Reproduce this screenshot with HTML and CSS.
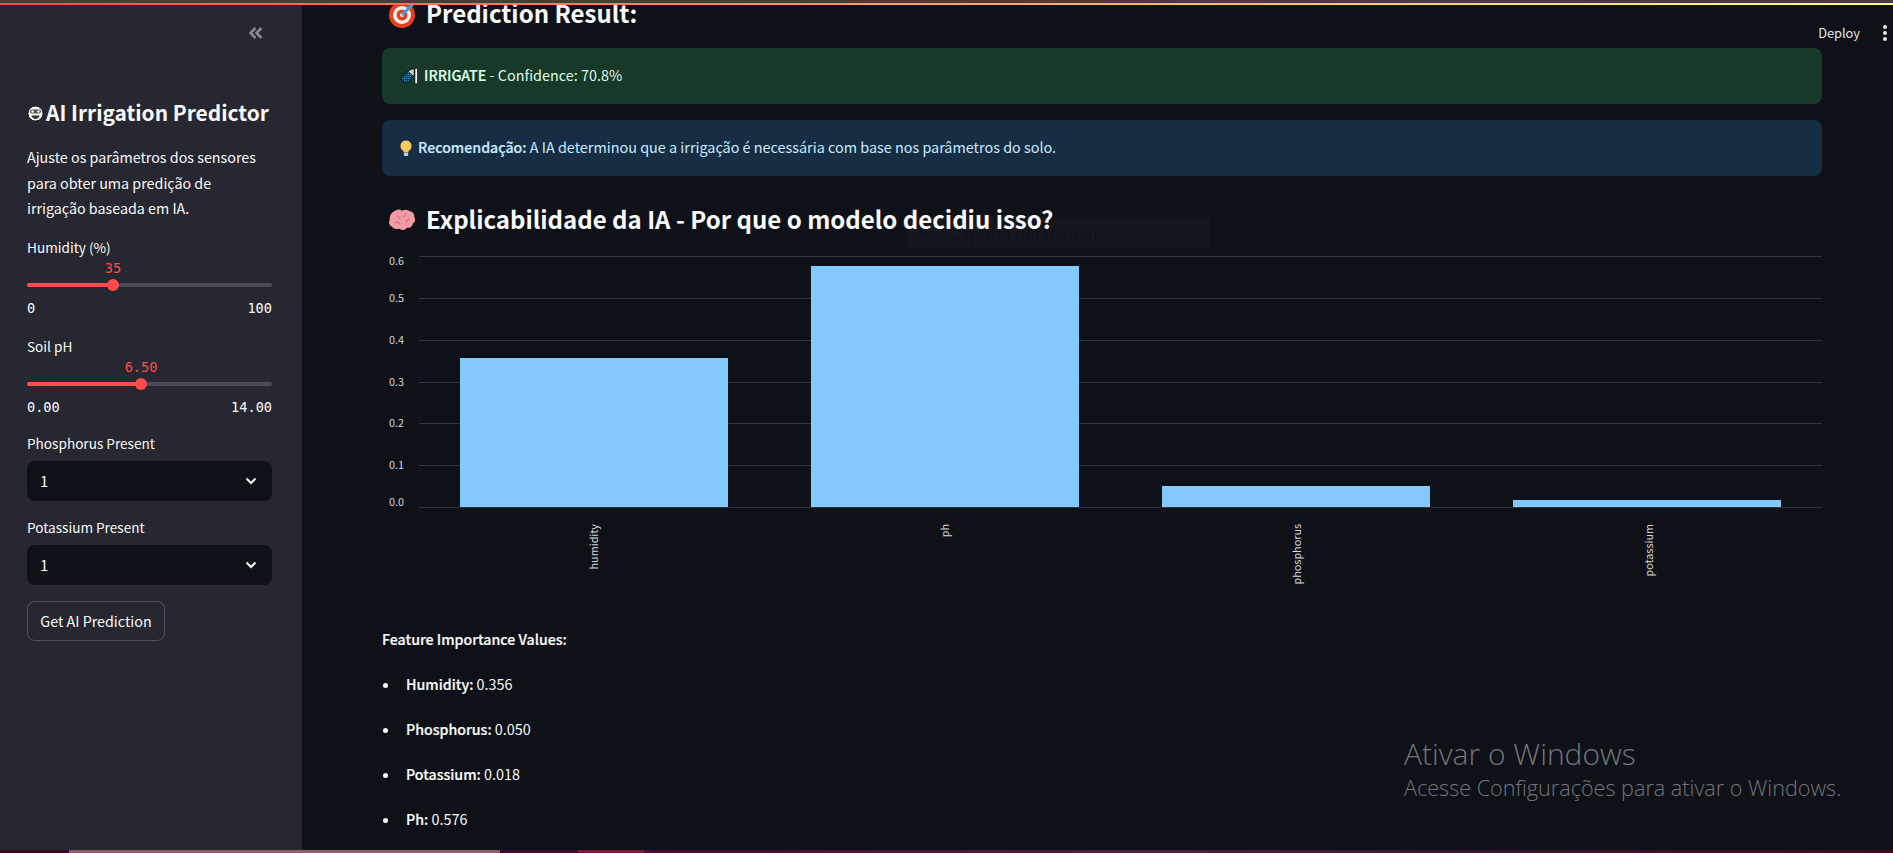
FILE: index.html
```html
<!DOCTYPE html>
<html lang="en">
<head>
    <meta charset="UTF-8">
    <title>AI Irrigation Predictor</title>
    <link rel="stylesheet" href="styles.css">
</head>
<body>
    <div class="top-strip"></div>
    <div class="app">
        <aside class="sidebar">
            <div class="collapse-row">
                <svg width="14" height="12" viewBox="0 0 14 12" fill="none" stroke="#8b8c93" stroke-width="2.600"><path d="M6.500 1 1.500 6l5 5M12.500 1l-5 5 5 5"/></svg>
            </div>
            <h2 class="side-title">
                <svg class="nerd" width="17" height="17" viewBox="0 0 17 17"><circle cx="8.500" cy="8.500" r="7.600" fill="#f2f2f2" stroke="#111" stroke-width="1"/><rect x="3" y="4.500" width="11" height="4" rx="2" fill="#555"/><circle cx="5.600" cy="6.500" r="1.300" fill="#eee"/><circle cx="11.400" cy="6.500" r="1.300" fill="#eee"/><path d="M4.500 10.500h8c-.6 2.400-2 3.400-4 3.400s-3.400-1-4-3.400z" fill="#333"/></svg>
                <span>AI Irrigation Predictor</span>
            </h2>
            <p class="side-text">Ajuste os parâmetros dos sensores para obter uma predição de irrigação baseada em IA.</p>

            <div class="widget slider-widget">
                <label class="field-label">Humidity (%)</label>
                <div class="slider-value"><span class="humidity-value">35</span></div>
                <div class="track"><div class="fill humidity-fill"><span class="thumb"></span></div></div>
                <div class="range"><span>0</span><span>100</span></div>
            </div>

            <div class="widget slider-widget">
                <label class="field-label">Soil pH</label>
                <div class="slider-value"><span class="ph-value">6.50</span></div>
                <div class="track"><div class="fill ph-fill"><span class="thumb"></span></div></div>
                <div class="range"><span>0.00</span><span>14.00</span></div>
            </div>

            <div class="widget select-widget">
                <label class="field-label">Phosphorus Present</label>
                <div class="select-box">
                    <span>1</span>
                    <svg width="12" height="8" viewBox="0 0 12 8" fill="none" stroke="#fafafa" stroke-width="2"><path d="M1.500 1.500 6 6l4.500-4.500"/></svg>
                </div>
            </div>

            <div class="widget select-widget">
                <label class="field-label">Potassium Present</label>
                <div class="select-box">
                    <span>1</span>
                    <svg width="12" height="8" viewBox="0 0 12 8" fill="none" stroke="#fafafa" stroke-width="2"><path d="M1.500 1.500 6 6l4.500-4.500"/></svg>
                </div>
            </div>

            <button class="predict-btn">Get AI Prediction</button>
        </aside>

        <main class="main">
            <div class="toolbar">
                <span class="deploy">Deploy</span>
                <span class="dots"><i></i><i></i><i></i></span>
            </div>

            <div class="content">
                <h2 class="section-title first">
                    <svg width="30" height="30" viewBox="0 0 30 30"><circle cx="15" cy="15" r="14.500" fill="#111"/><circle cx="15" cy="15" r="13" fill="#e8401f"/><circle cx="15" cy="15" r="9" fill="#f4f4f4"/><circle cx="15" cy="15" r="5.500" fill="#e8401f"/><circle cx="15" cy="15" r="2" fill="#f4f4f4"/><path d="M15 15 26 4" stroke="#3a9fe0" stroke-width="3"/></svg>
                    <span>Prediction Result:</span>
                </h2>

                <div class="alert alert-green">
                    <svg width="18" height="16" viewBox="0 0 18 16">
                        <defs><pattern id="hatch" width="2" height="2" patternUnits="userSpaceOnUse"><rect width="2" height="2" fill="#0f3f5c"/><rect width="1" height="1" fill="#2f8fc4"/></pattern></defs>
                        <path d="M.5 10.500 8 3l5 5-4.500 7h-4z" fill="url(#hatch)" stroke="#050505" stroke-width=".8"/>
                        <path d="M8 3l6-2.500V8h-1z" fill="#cfd2d0" stroke="#050505" stroke-width=".6"/>
                        <rect x="15" y=".5" width="2.400" height="15" fill="#f0f0f0" stroke="#050505" stroke-width=".5"/>
                    </svg>
                    <span class="alert-text"><b>IRRIGATE</b> - Confidence: 70.8%</span>
                </div>

                <div class="alert alert-blue">
                    <svg width="12" height="17" viewBox="0 0 12 17"><path d="M6 .5a5.500 5.500 0 0 1 3.200 10c-.6.500-.8 1-.8 1.700H3.600c0-.7-.2-1.200-.8-1.700A5.500 5.500 0 0 1 6 .5z" fill="#fdc95c"/><rect x="3.800" y="12.500" width="4.400" height="3.500" rx="1" fill="#c9ccd0"/></svg>
                    <span class="alert-text"><b>Recomendação:</b> A IA determinou que a irrigação é necessária com base nos parâmetros do solo.</span>
                </div>

                <h2 class="section-title second">
                    <svg width="30" height="26" viewBox="0 0 30 26"><path d="M8 2c3-2 6-1.500 7 0 2-1.500 6-1.500 8 .5 3 .5 5 3 5 6 1.500 2.500 1 6-1.500 7.500-.5 3-3.500 5-6 4.500-2 2.500-6 3-8 1-3 1-7 0-8.500-2.500C1.500 18 .5 14 2 11.500 1.500 7.500 4 3 8 2z" fill="#f29aa6" stroke="#111" stroke-width="1.500"/><path d="M9 8c2 0 3 1 4 3M19 5c-1 2-1 3-3 4M23 11c-2 0-3 1-4 3M8 15c2-1 4-1 5 1" fill="none" stroke="#d9707f" stroke-width="1.200"/></svg>
                    <span>Explicabilidade da IA - Por que o modelo decidiu isso?</span>
                </h2>

                <svg class="chart" width="1440" height="332" viewBox="0 0 1440 332">
                    <g stroke="#31333c" stroke-width="1">
                        <line x1="37" y1="0.5" x2="1440" y2="0.5"/>
                        <line x1="37" y1="42.5" x2="1440" y2="42.5"/>
                        <line x1="37" y1="84.5" x2="1440" y2="84.5"/>
                        <line x1="37" y1="126.5" x2="1440" y2="126.5"/>
                        <line x1="37" y1="167.5" x2="1440" y2="167.5"/>
                        <line x1="37" y1="209.5" x2="1440" y2="209.5"/>
                        <line x1="37" y1="251.5" x2="1440" y2="251.5"/>
                    </g>
                    <g fill="#83c9ff">
                        <rect x="78" y="102" width="268" height="149"/>
                        <rect x="429" y="10" width="268" height="241"/>
                        <rect x="780" y="230" width="268" height="21"/>
                        <rect x="1131" y="244" width="268" height="7"/>
                    </g>
                    <g class="tick" text-anchor="end">
                        <text x="22" y="9">0.6</text>
                        <text x="22" y="46">0.5</text>
                        <text x="22" y="88">0.4</text>
                        <text x="22" y="130">0.3</text>
                        <text x="22" y="171">0.2</text>
                        <text x="22" y="213">0.1</text>
                        <text x="22" y="250">0.0</text>
                    </g>
                    <g class="tick" text-anchor="end">
                        <text transform="translate(216 268) rotate(-90)">humidity</text>
                        <text transform="translate(567 268) rotate(-90)">ph</text>
                        <text transform="translate(919 268) rotate(-90)">phosphorus</text>
                        <text transform="translate(1271 268) rotate(-90)">potassium</text>
                    </g>
                </svg>

                <p class="values-title">Feature Importance Values:</p>
                <ul class="values">
                    <li><b>Humidity:</b> 0.356</li>
                    <li><b>Phosphorus:</b> 0.050</li>
                    <li><b>Potassium:</b> 0.018</li>
                    <li><b>Ph:</b> 0.576</li>
                </ul>
            </div>

            <!-- faint snipping tool window left over in the capture -->
            <div class="ghost"><i></i><span>Captura Retangular</span></div>

            <div class="watermark">
                <div class="wm-big">Ativar o Windows</div>
                <div class="wm-small">Acesse Configurações para ativar o Windows.</div>
            </div>
        </main>
    </div>
    <div class="taskbar">
        <span class="tb-a"></span><span class="tb-b"></span><span class="tb-c"></span><span class="tb-d"></span><span class="tb-e"></span><span class="tb-f"></span>
    </div>
</body>
</html>
```

FILE: styles.css
```css
* {
    box-sizing: border-box;
}
html, body {
    height: 100%;
}
body {
    margin: 0;
    display: flex;
    flex-direction: column;
    overflow: hidden;
    background-color: #0e1117;
    color: #fafafa;
    font-family: "Noto Sans CJK SC", "Noto Sans", sans-serif;
    font-size: 14.4px;
}
svg {
    flex: none;
}
.top-strip {
    height: 5px;
    flex: none;
    background:
        linear-gradient(90deg, #ff4b4b, #fffd80) 0 3px / 100% 2px no-repeat,
        #4d3a40;
}
.app {
    flex: 1;
    display: flex;
    min-height: 0;
}

/* sidebar */
.sidebar {
    width: 302px;
    flex: none;
    background-color: #262730;
    padding: 0 30px 0 27px;
    font-size: 14.3px;
}
.collapse-row {
    height: 34px;
    padding-top: 22px;
    display: flex;
    justify-content: flex-end;
    margin-right: 9px;
}
.side-title {
    margin: 55px 0 0;
    height: 36px;
    display: flex;
    align-items: center;
    gap: 2px;
    font-size: 20.9px;
    line-height: 36px;
    font-weight: 600;
    white-space: nowrap;
}
.side-title svg {
    margin-top: 2px;
}
.side-text {
    margin: 14px 0 0;
    line-height: 25.6px;
}
.field-label {
    display: block;
    font-size: 13.6px;
    line-height: 18px;
    height: 20px;
}
.slider-widget {
    margin-top: 17px;
}
.slider-widget + .slider-widget {
    margin-top: 19px;
}
.slider-value {
    height: 25px;
    line-height: 20px;
    position: relative;
    font-family: "DejaVu Sans Mono", monospace;
    font-size: 13.6px;
    color: #ff4b4b;
}
.slider-value span {
    position: absolute;
    top: 0;
    transform: translateX(-50%);
}
.humidity-value {
    left: 86px;
}
.ph-value {
    left: 114px;
}
.track {
    height: 4px;
    border-radius: 2px;
    background-color: #4a4b55;
}
.fill {
    height: 4px;
    border-radius: 2px;
    background-color: #ff4b4b;
    position: relative;
}
.humidity-fill {
    width: 35%;
}
.ph-fill {
    width: 46.4%;
}
.thumb {
    position: absolute;
    right: -6px;
    top: -4px;
    width: 12px;
    height: 12px;
    border-radius: 50%;
    background-color: #ff4b4b;
}
.range {
    display: flex;
    justify-content: space-between;
    margin-top: 11px;
    height: 20px;
    font-family: "DejaVu Sans Mono", monospace;
    font-size: 13.6px;
    line-height: 20px;
}
.select-widget {
    margin-top: 17px;
}
.select-box {
    margin-top: 7px;
    height: 40px;
    border-radius: 8px;
    background-color: #0e1117;
    display: flex;
    align-items: center;
    justify-content: space-between;
    padding: 0 15px 0 13px;
    font-size: 15px;
}
.predict-btn {
    display: block;
    margin-top: 16px;
    width: 138px;
    height: 40px;
    padding: 0;
    border-radius: 8px;
    border: 1px solid #50515a;
    background-color: #262730;
    color: #fafafa;
    font-family: inherit;
    font-size: 14.3px;
}

/* main area */
.main {
    flex: 1;
    position: relative;
    overflow: hidden;
    padding: 0 71px 0 80px;
}
.toolbar {
    position: absolute;
    top: 18px;
    right: 0;
    height: 20px;
    display: flex;
    align-items: center;
    font-size: 12.8px;
    color: #e6e6e6;
}
.deploy {
    margin-right: 23px;
    margin-bottom: 2px;
}
.dots {
    display: flex;
    flex-direction: column;
    gap: 2px;
    margin-right: 6px;
}
.dots i {
    width: 4px;
    height: 4px;
    border-radius: 50%;
    background-color: #e6e6e6;
}
.section-title {
    margin: 0;
    position: relative;
    z-index: 1;
    display: flex;
    align-items: center;
    gap: 9px;
    height: 40px;
    font-size: 24px;
    line-height: 36px;
    font-weight: 600;
    white-space: nowrap;
}
.section-title span {
    padding-bottom: 4px;
}
.section-title svg {
    margin-left: 5px;
}
.section-title.first {
    margin-top: -10px;
}
.section-title.second {
    margin-top: 25px;
}
.alert {
    height: 56px;
    border-radius: 8px;
    display: flex;
    align-items: center;
    gap: 6px;
    padding: 0 18px;
}
.alert-text {
    padding-bottom: 3px;
}
b {
    font-weight: 500;
    font-size: 14.2px;
    -webkit-text-stroke: .2px currentColor;
}
.alert-green {
    margin-top: 13px;
    background-color: #173928;
    color: #dffde9;
}
.alert-blue {
    margin-top: 16px;
    background-color: #172d43;
    color: #c7ebff;
}
.chart {
    display: block;
    margin-top: 15px;
    overflow: visible;
}
.tick text {
    font-size: 10.8px;
    fill: #d5d6d8;
}
.values-title {
    margin: 38px 0 0;
    font-weight: 500;
    font-size: 14.2px;
    -webkit-text-stroke: .2px currentColor;
    line-height: 26px;
}
.values {
    margin: 19px 0 0;
    padding: 0;
    list-style: none;
}
.values li {
    height: 45px;
    line-height: 26px;
}
.values li::before {
    content: "";
    display: inline-block;
    width: 5px;
    height: 5px;
    border-radius: 50%;
    background-color: #fafafa;
    margin: 0 18px 2px 1px;
    vertical-align: middle;
}
.ghost {
    position: absolute;
    left: 606px;
    top: 212px;
    width: 302px;
    height: 31px;
    display: flex;
    align-items: center;
    gap: 22px;
    padding-left: 12px;
    background-color: #14171e;
    color: #0f1218;
    font-size: 16.5px;
}
.ghost i {
    width: 8px;
    height: 8px;
    border-radius: 50%;
    background-color: #0f1218;
}
.watermark {
    position: absolute;
    left: 1102px;
    top: 730px;
    color: #73767b;
    font-family: "Open Sans", sans-serif;
    font-weight: 300;
    white-space: nowrap;
}
.wm-big {
    font-size: 30px;
    line-height: 38px;
}
.wm-small {
    font-size: 21.6px;
    line-height: 30px;
}

/* bit of the desktop showing under the window */
.taskbar {
    height: 3px;
    flex: none;
    display: flex;
}
.tb-a {
    width: 69px;
    background-color: #3a0a20;
}
.tb-b {
    width: 431px;
    background-color: #8c5f6c;
}
.tb-c {
    width: 78px;
    background-color: #3c0c28;
}
.tb-d {
    width: 66px;
    background-color: #7e1a3c;
}
.tb-e {
    width: 7px;
    background-color: #4e0f2c;
}
.tb-f {
    flex: 1;
    background: linear-gradient(90deg, #4a0c2c, #4c2238 40%, #3a1428 70%, #3f0a22);
}
```
